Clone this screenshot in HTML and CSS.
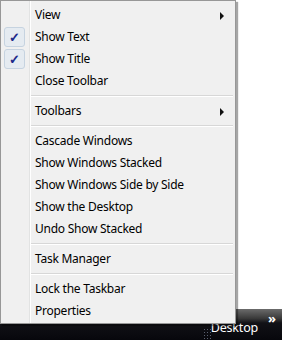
FILE: index.html
```html
<!DOCTYPE html>
<html lang="en">
<head>
    <meta charset="UTF-8">
    <title>Taskbar menu</title>
    <link rel="stylesheet" href="styles.css">
</head>
<body>
    <!-- Desktop and taskbar -->
    <div class="desktop"></div>
    <div class="taskbar">
        <div class="grip"></div>
        <span class="tb-label">Desktop</span>
        <span class="tb-chevron">&raquo;</span>
    </div>

    <!-- Context menu -->
    <div class="menu">
        <div class="gutter-line"></div>
        <div class="item has-sub">View <span class="sub-arrow"></span></div>
        <div class="item checked"><span class="check">&#10003;</span>Show Text</div>
        <div class="item checked"><span class="check">&#10003;</span>Show Title</div>
        <div class="item">Close Toolbar</div>
        <div class="sep"></div>
        <div class="item has-sub">Toolbars <span class="sub-arrow"></span></div>
        <div class="sep"></div>
        <div class="item">Cascade Windows</div>
        <div class="item">Show Windows Stacked</div>
        <div class="item">Show Windows Side by Side</div>
        <div class="item">Show the Desktop</div>
        <div class="item">Undo Show Stacked</div>
        <div class="sep"></div>
        <div class="item">Task Manager</div>
        <div class="sep"></div>
        <div class="item">Lock the Taskbar</div>
        <div class="item">Properties</div>
    </div>
</body>
</html>
```

FILE: styles.css
```css
/* Page */
body {
    margin: 0;
    width: 282px;
    height: 340px;
    display: flex;
    flex-direction: column;
    background: #fff;
    font-family: "Noto Sans", "Open Sans", sans-serif;
    font-size: 12px;
    overflow: hidden;
}

.desktop {
    flex: 1;
    background: #fff;
}

/* Taskbar */
.taskbar {
    height: 31px;
    background: linear-gradient(to bottom, #6b6b6b 0%, #3a3a3a 30%, #111116 45%, #07070c 100%);
    display: flex;
    align-items: center;
    justify-content: flex-end;
    position: relative;
    color: #fff;
}

.grip {
    position: absolute;
    left: 203px;
    top: 19px;
    width: 8px;
    height: 12px;
    background: radial-gradient(circle, #5a6070 0.6px, transparent 1px) 0 0 / 3px 3px;
}

.tb-label {
    font-size: 12.5px;
    margin-top: 6px;
    margin-right: 24px;
    letter-spacing: -0.2px;
}

.tb-chevron {
    position: absolute;
    right: 6px;
    top: 0;
    font-size: 13px;
    font-weight: bold;
}

/* Menu */
.menu {
    position: absolute;
    top: 0;
    left: 0;
    width: 234px;
    padding: 3px 0 1px;
    background: #f0f0f0;
    border: 1px solid #979797;
    box-shadow: 2px 2px 1px rgba(0, 0, 0, 0.35);
    letter-spacing: -0.25px;
}

.gutter-line {
    position: absolute;
    top: 0;
    bottom: 0;
    left: 28px;
    width: 1px;
    background: #e2e3e3;
    border-right: 1px solid #fff;
}

.item {
    height: 22px;
    line-height: 22px;
    padding-left: 34px;
    position: relative;
    color: #000;
}

.check {
    position: absolute;
    left: 3px;
    top: 1px;
    width: 19px;
    height: 18px;
    line-height: 18px;
    text-align: center;
    border: 1px solid #c6d3e0;
    border-radius: 3px;
    background: #e5ebf1;
    color: #1e2a8a;
    font-size: 13px;
    font-weight: bold;
    letter-spacing: 0;
}

.sub-arrow {
    position: absolute;
    right: 11px;
    top: 8px;
    width: 0;
    height: 0;
    border-top: 4px solid transparent;
    border-bottom: 4px solid transparent;
    border-left: 4px solid #111;
}

.sep {
    height: 8px;
    margin-left: 30px;
    margin-right: 2px;
    box-sizing: border-box;
    padding-top: 3px;
}

.sep::before {
    content: "";
    display: block;
    height: 1px;
    background: #d7d7d7;
    border-bottom: 1px solid #fff;
}
```
